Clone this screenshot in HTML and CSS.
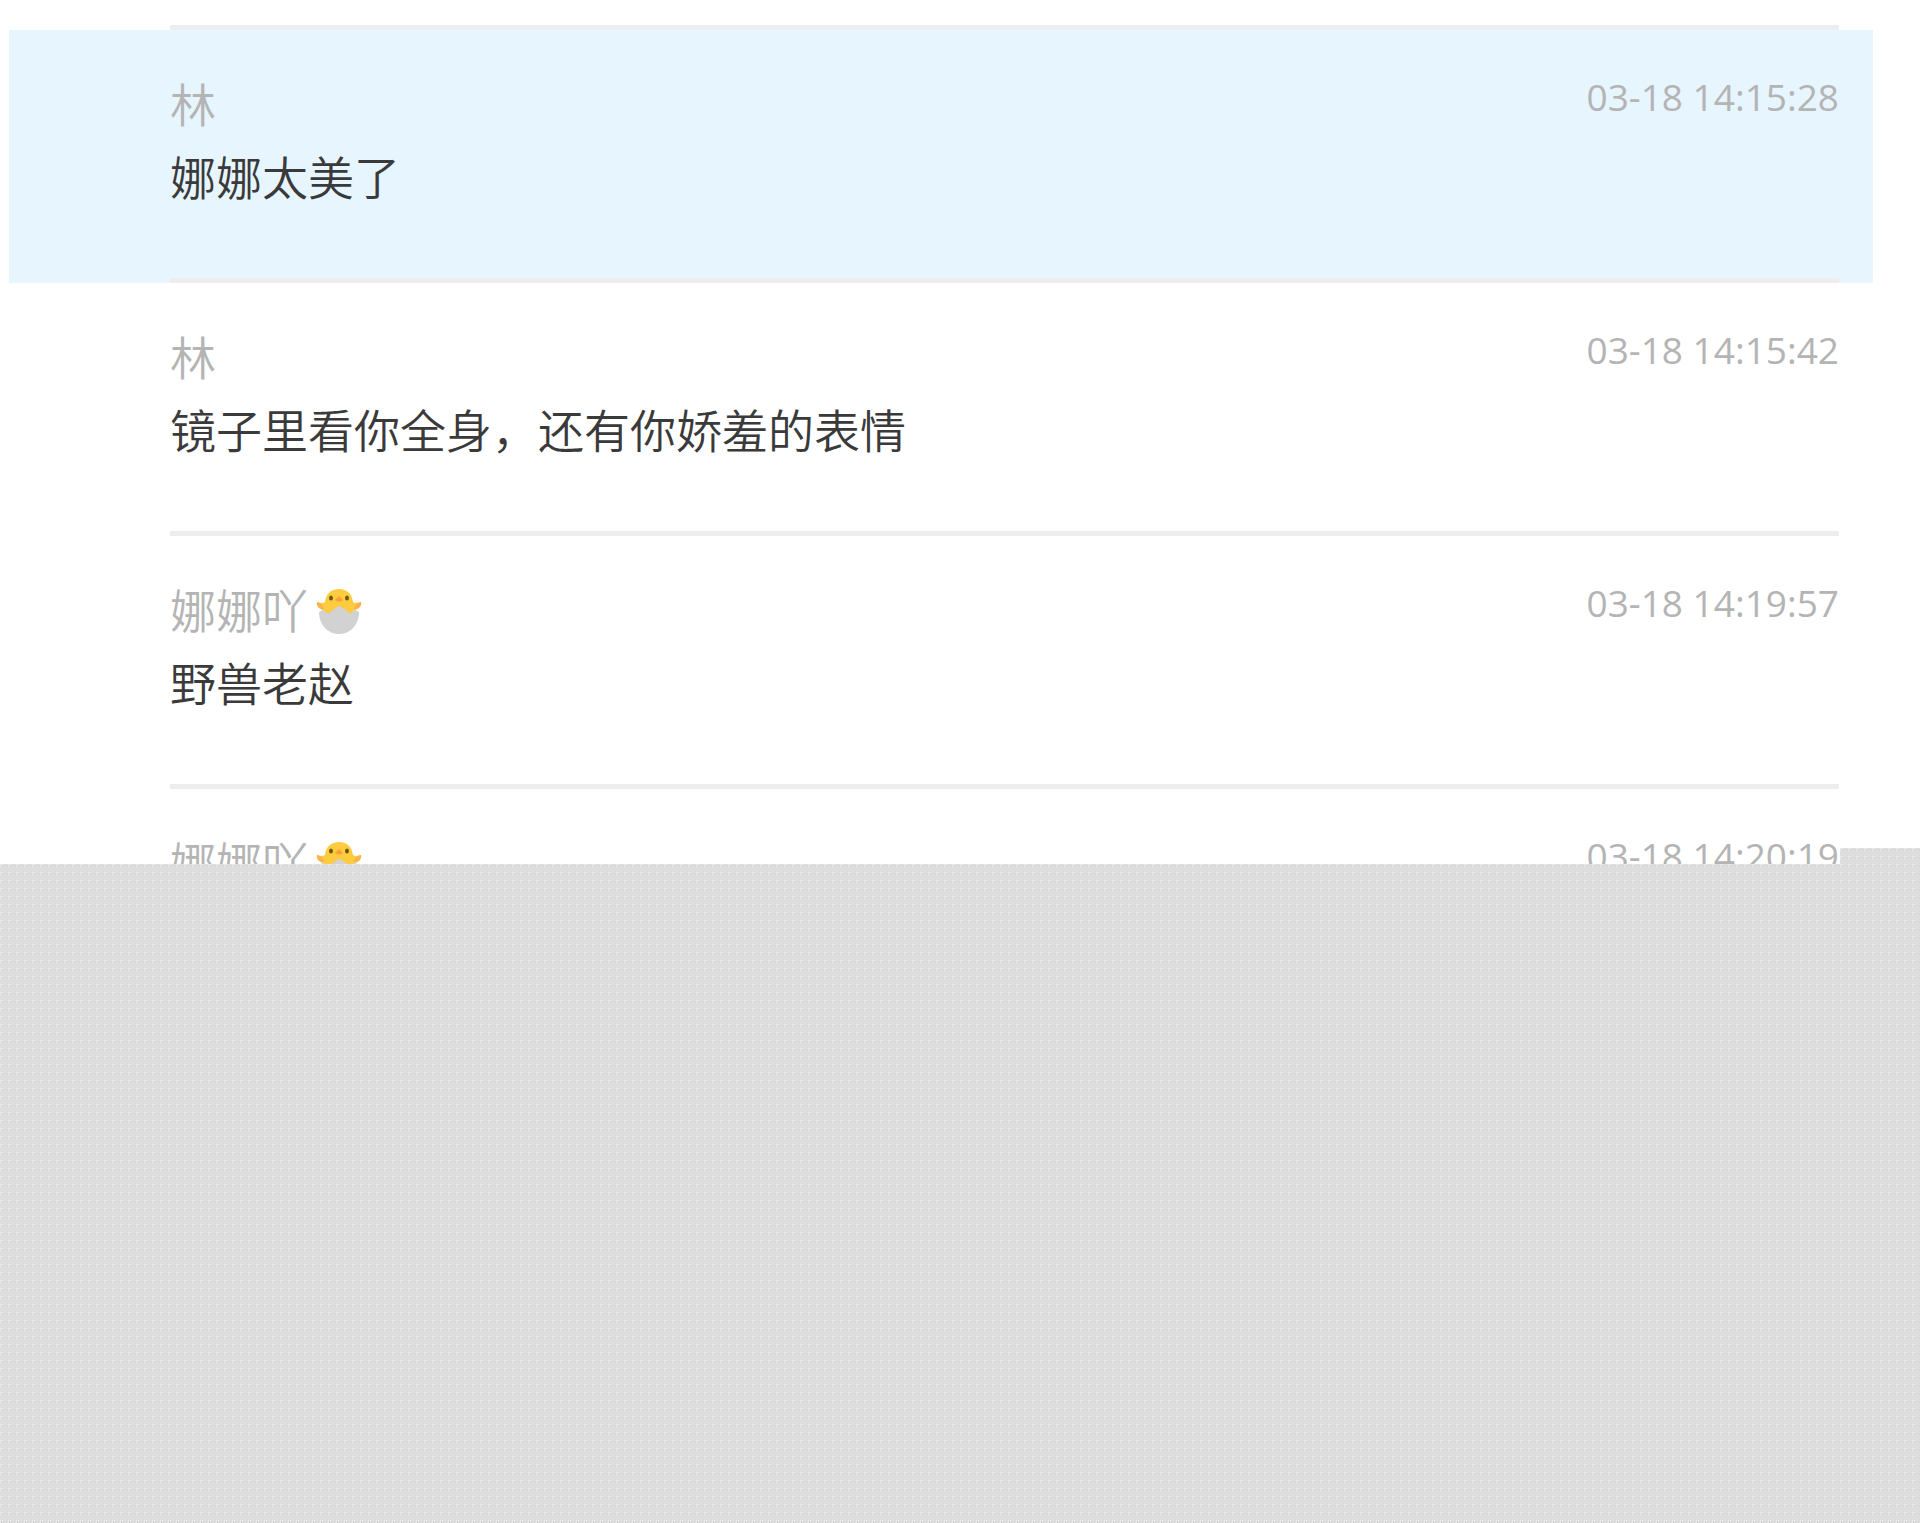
FILE: index.html
```html
<!DOCTYPE html>
<html lang="zh-CN">
<head>
<meta charset="utf-8">
<meta name="viewport" content="width=device-width, initial-scale=1">
<title>聊天记录</title>
<link rel="stylesheet" href="styles.css">
</head>
<body>
<svg class="defs" aria-hidden="true">
  <symbol id="chick" viewBox="0 0 46 46">
    <path d="M3 23C3 35 11 45 23 45S43 35 43 23L38 20H8Z" fill="#d2d2d2"/>
    <path d="M23 0C15 0 10 5 9 13C6 15 2 13 1 13C0 17 4 21 8 21L12 25L18 20L23 26L29 20L34 25L38 21C42 21 46 17 45 13C43 13 40 15 37 13C36 5 31 0 23 0Z" fill="#fdcb3e"/>
    <path d="M1 13C0 17 4 21 8 20C8 17 5 14 1 13ZM45 13C46 17 42 21 38 20C38 17 41 14 45 13Z" fill="#f9b24c"/>
    <path d="M23 17L29 20L23 27L18 20Z" fill="#d2d2d2"/>
    <ellipse cx="15" cy="9" rx="2" ry="2.5" fill="#6b5a10"/>
    <ellipse cx="31" cy="9" rx="2" ry="2.5" fill="#6b5a10"/>
    <path d="M23 7L27 11Q23 14 19 11Z" fill="#fb9f3a"/>
  </symbol>
</svg>
<main class="page">
  <ul class="log">
    <li class="row row-selected">
      <article class="entry">
        <div class="text"><h2 class="name">林</h2><p class="message">娜娜太美了</p></div>
        <time class="time">03-18 14:15:28</time>
      </article>
    </li>
    <li class="row">
      <article class="entry">
        <div class="text"><h2 class="name">林</h2><p class="message">镜子里看你全身，还有你娇羞的表情</p></div>
        <time class="time">03-18 14:15:42</time>
      </article>
    </li>
    <li class="row">
      <article class="entry">
        <div class="text"><h2 class="name">娜娜吖<svg class="chick" role="img" aria-label="小鸡"><use href="#chick"/></svg></h2><p class="message">野兽老赵</p></div>
        <time class="time">03-18 14:19:57</time>
      </article>
    </li>
    <li class="row row-cut">
      <article class="entry">
        <div class="text"><h2 class="name">娜娜吖<svg class="chick" role="img" aria-label="小鸡"><use href="#chick"/></svg></h2></div>
        <time class="time">03-18 14:20:19</time>
      </article>
    </li>
  </ul>
</main>
</body>
</html>
```
FILE: styles.css
```css
* {
  box-sizing: border-box;
}

body {
  margin: 0;
  min-height: 100vh;
  background: #ddd url("data:image/svg+xml,%3Csvg xmlns='http://www.w3.org/2000/svg' width='8' height='8' shape-rendering='crispEdges'%3E%3Cpath d='M0 0h1v1h-1zM2 0h1v1h-1zM1 1h1v1h-1zM0 2h1v1h-1z' fill='%23fff'/%3E%3Cpath d='M1 0h1v1h-1zM0 1h1v1h-1zM2 1h1v1h-1zM1 2h1v1h-1z' fill='%23c8c8c8'/%3E%3C/svg%3E");
  font-family: "Open Sans", "Noto Sans CJK SC", sans-serif;
}

.defs {
  position: absolute;
  width: 0;
  height: 0;
}

.page {
  padding-top: 25px;
  background: #fff;
  /* the lower right corner is notched past the text column */
  clip-path: polygon(0 0, 100% 0, 100% calc(100% - 16px), calc(100% - 80px) calc(100% - 16px), calc(100% - 80px) 100%, 0 100%);
}

.log {
  margin: 0;
  padding: 0;
  list-style: none;
}

.log::before {
  content: "";
  display: block;
  height: 5px;
  margin: 0 81px 0 170px;
  background: #ededed;
}

.row {
  margin: 0 47px 0 9px;
  padding: 0 34px 0 161px;
}

.row-selected {
  background: #e7f5ff;
}

.entry {
  display: flex;
  justify-content: space-between;
  height: 253px;
  padding-top: 36px;
  border-bottom: 5px solid #ededed;
}

.name,
.message {
  display: flex;
  align-items: center;
  margin: 0;
  font-family: "Noto Sans CJK SC", sans-serif;
  font-size: 46px;
  font-weight: 350;
  line-height: 73px;
}

.name {
  color: #b4b4b4;
}

.message {
  color: #3a3a3a;
}

.time {
  color: #b4b4b4;
  font-size: 37px;
  line-height: 62px;
}

.chick {
  width: 46px;
  height: 46px;
  margin: 6px 0 0 8px;
}

.row-cut .entry {
  height: 75px;
  border-bottom: 0;
  overflow: hidden;
}
```
